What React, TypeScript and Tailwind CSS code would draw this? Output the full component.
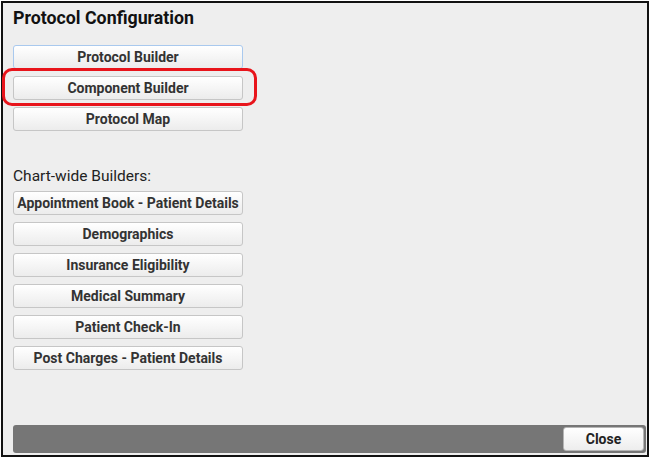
const builders = ["Protocol Builder", "Component Builder", "Protocol Map"];

const chartWide = [
  "Appointment Book - Patient Details",
  "Demographics",
  "Insurance Eligibility",
  "Medical Summary",
  "Patient Check-In",
  "Post Charges - Patient Details",
];

function BuilderButton({ label, focused }: { label: string; focused?: boolean }) {
  return (
    <button
      className={`h-6 w-[230px] rounded-[3px] border bg-gradient-to-b from-[#ffffff] to-[#ececec] text-[14px] font-bold text-[#333] leading-none whitespace-nowrap ${
        focused ? "border-[#a9c9ee]" : "border-[#c6c6c6]"
      }`}
    >
      {label}
    </button>
  );
}

export default function App() {
  return (
    <div
      className="relative h-[457px] w-[650px] bg-white pl-px pt-px"
      style={{ fontFamily: "Roboto, 'Liberation Sans', sans-serif" }}
    >
      <div className="flex h-[456px] w-[648px] flex-col border-2 border-[#111] bg-[#eeeeee] pl-[10px]">
        <h1 className="mt-[4px] text-[17.8px] font-bold leading-[22px] text-[#111]">
          Protocol Configuration
        </h1>

        <div className="mt-[16px] flex flex-col gap-[7px]">
          {builders.map((b, i) => (
            <BuilderButton key={b} label={b} focused={i === 0} />
          ))}
        </div>

        <div className="mt-[36px] text-[15.5px] leading-[18px] text-[#222]">Chart-wide Builders:</div>

        <div className="mt-[6px] flex flex-col gap-[7px]">
          {chartWide.map((b) => (
            <BuilderButton key={b} label={b} />
          ))}
        </div>

        <div className="mt-auto mb-[2px] mr-[1px] flex h-7 items-center justify-end rounded-[3px] bg-[#767676] px-[2px]">
          <button className="h-6 w-[81px] rounded-[3px] border border-[#b5b5b5] bg-gradient-to-b from-[#ffffff] to-[#ededed] text-[14px] font-bold text-[#222] leading-none">
            Close
          </button>
        </div>
      </div>

      {/* highlight around Component Builder */}
      <div className="pointer-events-none absolute left-[2px] top-[68px] h-[38px] w-[255px] rounded-[10px] border-[3px] border-[#e8141b]" />
    </div>
  );
}
